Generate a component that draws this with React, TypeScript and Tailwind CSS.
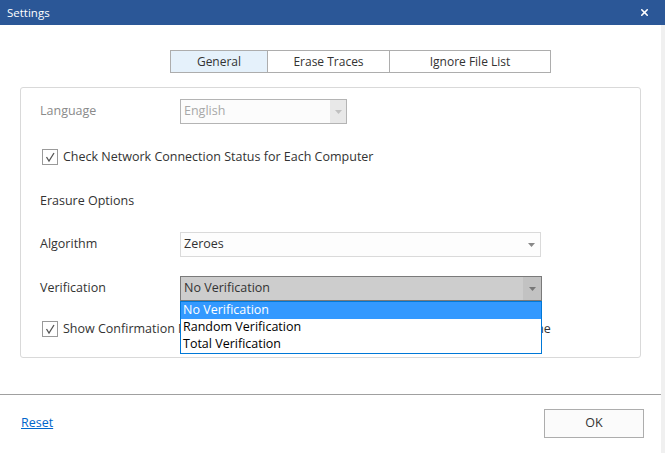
import { X } from "lucide-react";

function Arrow({ className }: { className?: string }) {
  return (
    <svg width="7" height="4" viewBox="0 0 7 4" className={className}>
      <path d="M0 0 L7 0 L3.5 4 Z" fill="currentColor" />
    </svg>
  );
}

function Check() {
  return (
    <div className="w-4 h-4 border border-[#9a9a9a] bg-white flex items-center justify-center">
      <svg width="12" height="12" viewBox="0 0 12 12">
        <path d="M2.5 6 L5 10 L10 2" stroke="#555" strokeWidth="1.3" fill="none" />
      </svg>
    </div>
  );
}

export default function App() {
  return (
    <div
      className="w-[665px] h-[453px] bg-white flex flex-col overflow-hidden text-[#333]"
      style={{ fontFamily: '"Open Sans", "Noto Sans", sans-serif' }}
    >
      <div className="h-[25px] bg-[#2b5797] flex items-center justify-between pl-[7px] pr-[15px] text-white">
        <span className="text-[11.5px]">Settings</span>
        <X className="w-[11px] h-[11px]" strokeWidth={3.5} />
      </div>
      <div className="flex flex-1">
        <div className="w-[661px] flex flex-col">
          {/* tabs */}
          <div className="flex ml-[170px] mt-[25px] h-[23px] text-[12px]">
            <div className="w-[98px] border border-[#adadad] bg-[#e5f1fb] flex items-center justify-center">General</div>
            <div className="w-[122px] border border-l-0 border-[#adadad] flex items-center justify-center">Erase Traces</div>
            <div className="w-[161px] border border-l-0 border-[#adadad] flex items-center justify-center">Ignore File List</div>
          </div>

          {/* group box */}
          <div className="mx-[20px] mt-[14px] h-[271px] border border-[#d9d9d9] rounded-[3px] pl-[19px] pt-[11px] text-[12.5px]">
            <div className="flex items-center h-[25px]">
              <span className="w-[140px] text-[#8a8a8a]">Language</span>
              <div className="w-[167px] h-[25px] border border-[#b4b4b4] bg-[#fcfcfc] flex items-center justify-between pl-[3px]">
                <span className="text-[#a8a8a8]">English</span>
                <div className="w-[16px] h-full bg-[#e8e8e8] flex items-center justify-center text-[#c0c0c0]">
                  <Arrow />
                </div>
              </div>
            </div>

            <div className="flex items-center gap-[5px] mt-[25px] ml-[2px] h-[16px]">
              <Check />
              <span>Check Network Connection Status for Each Computer</span>
            </div>

            <div className="mt-[28px] h-[16px] flex items-center">Erasure Options</div>

            <div className="flex items-center h-[25px] mt-[23px]">
              <span className="w-[140px]">Algorithm</span>
              <div className="w-[361px] h-[25px] border border-[#dadada] bg-[#fdfdfd] flex items-center justify-between pl-[3px]">
                <span>Zeroes</span>
                <div className="w-[18px] h-full flex items-center justify-center text-[#888]">
                  <Arrow />
                </div>
              </div>
            </div>

            <div className="flex items-center h-[25px] mt-[19px]">
              <span className="w-[140px]">Verification</span>
              <div className="relative w-[362px] h-[25px] border border-[#7a7a7a] bg-[#cdcdcd] flex items-center justify-between pl-[3px]">
                <span>No Verification</span>
                <div className="w-[18px] h-full bg-[#c2c2c2] flex items-center justify-center text-[#777]">
                  <Arrow />
                </div>
                <div className="absolute left-[-1px] top-[24px] w-[362px] h-[53px] border border-[#0078d7] bg-white z-10 text-black">
                  <div className="h-[17px] bg-[#3399ff] text-white pl-[2px] flex items-center">No Verification</div>
                  <div className="h-[17px] pl-[2px] flex items-center">Random Verification</div>
                  <div className="h-[17px] pl-[2px] flex items-center">Total Verification</div>
                </div>
              </div>
            </div>

            <div className="flex items-center gap-[5px] mt-[20px] ml-[2px] h-[16px]">
              <Check />
              <span className="whitespace-nowrap">Show Confirmation Message before Shutting Down Computer after Erase Each Time</span>
            </div>
          </div>

          <div className="mt-[36px] h-px bg-[#a0a0a0]" />

          <div className="flex items-center justify-between pl-[21px] pr-[17px] flex-1 pb-[1px]">
            <a className="text-[12.5px] text-[#0066cc] underline">Reset</a>
            <button className="w-[100px] h-[29px] border border-[#adadad] bg-[#fbfbfb] text-[12.5px]">OK</button>
          </div>
        </div>
        <div className="w-[4px] bg-[#f0f0f0]" />
      </div>
    </div>
  );
}
